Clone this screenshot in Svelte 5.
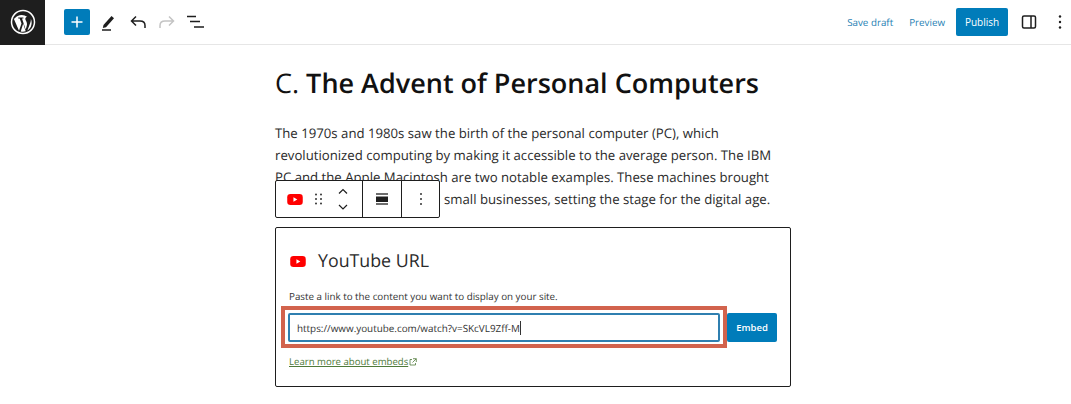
<script>
  const lines = [
    'The 1970s and 1980s saw the birth of the personal computer (PC), which',
    'revolutionized computing by making it accessible to the average person. The IBM',
    'PC and the Apple Macintosh are two notable examples. These machines brought',
    'computing into homes and small businesses, setting the stage for the digital age.'
  ];
</script>

{#snippet youtube()}
  <svg width="16" height="11" viewBox="0 0 24 17" class="yt">
    <rect width="24" height="17" rx="5" fill="#f00" />
    <path d="M9.6 5v7l6-3.500z" fill="#fff" />
  </svg>
{/snippet}

<div class="page">
  <header class="topbar">
    <div class="left">
      <div class="logo">
        <svg width="26" height="26" viewBox="0 0 26 26">
          <circle cx="13" cy="13" r="11.500" fill="none" stroke="#fff" stroke-width="1.500" />
          <path d="M3.700 9.500 9 21.800l2.500-7.300-1.800-5-1.500-.1V8.600h5.200v.8l-1.400.1 3.700 10.900 1-3.400c.6-1.900.3-3.300-.6-5-.5-1-1-1.800-.7-2.700.3-.8 1.100-1.300 1.900-1.200-3.500-3.300-10-2.600-12.600 1.400z" fill="#fff" />
          <path d="M13.200 14.600 10.700 22.400c1.600.5 3.400.4 5-.1zM20.800 9.700c.2 1.500-.1 2.800-.6 4.200l-2.800 7.600c4-2.300 5.300-7.700 3.400-11.800z" fill="#fff" />
        </svg>
      </div>
      <button class="add" aria-label="Add block">
        <svg width="14" height="14" viewBox="0 0 14 14"><path d="M7 1.500v11M1.500 7h11" stroke="#fff" stroke-width="1.500" /></svg>
      </button>
      <svg class="tool" width="20" height="20" viewBox="0 0 20 20">
        <path d="M4.500 13 12.500 4l2.500 2.300-8 9-3.200.6z" fill="#1e1e1e" />
        <path d="M3 18h9" stroke="#1e1e1e" stroke-width="1.500" />
      </svg>
      <svg class="tool" width="20" height="20" viewBox="0 0 20 20" fill="none" stroke="#1e1e1e" stroke-width="1.500">
        <path d="M17 16v-2.500c0-3-2-4.500-5-4.500H4M8 4.500 3.500 9 8 13.500" />
      </svg>
      <svg class="tool" width="20" height="20" viewBox="0 0 20 20" fill="none" stroke="#c4c4c4" stroke-width="1.500">
        <path d="M3 16v-2.500C3 10.500 5 9 8 9h8M12 4.500 16.500 9 12 13.500" />
      </svg>
      <svg class="tool" width="20" height="20" viewBox="0 0 20 20" fill="none" stroke="#1e1e1e" stroke-width="1.500">
        <path d="M1 4.500h9M4 9.500h10M8 15h10" />
      </svg>
    </div>
    <div class="right">
      <span class="link">Save draft</span>
      <span class="link">Preview</span>
      <button class="publish">Publish</button>
      <svg class="side" width="16" height="16" viewBox="0 0 16 16" fill="none" stroke="#1e1e1e" stroke-width="1.500">
        <rect x="1.500" y="2" width="13" height="12" rx="1.500" />
        <path d="M10 2v12" />
      </svg>
      <svg class="dots" width="4" height="16" viewBox="0 0 4 16" fill="#1e1e1e">
        <circle cx="2" cy="2.500" r="1.200" /><circle cx="2" cy="8" r="1.200" /><circle cx="2" cy="13.500" r="1.200" />
      </svg>
    </div>
  </header>

  <main class="editor">
    <h1><span class="light">C.</span> The Advent of Personal Computers</h1>

    <div class="para-wrap">
      <p>
        {#each lines as line}
          <span class="line">{line}</span>
        {/each}
      </p>

      <div class="block-toolbar">
        <div class="group first">
          {@render youtube()}
          <svg class="drag" width="10" height="14" viewBox="0 0 10 14" fill="#333">
            <circle cx="2" cy="2.500" r="1" /><circle cx="7" cy="2.500" r="1" />
            <circle cx="2" cy="7" r="1" /><circle cx="7" cy="7" r="1" />
            <circle cx="2" cy="11.500" r="1" /><circle cx="7" cy="11.500" r="1" />
          </svg>
          <svg width="12" height="24" viewBox="0 0 12 24" fill="none" stroke="#1e1e1e" stroke-width="1.200">
            <path d="M2 6.500 6 2.500l4 4M2 18l4 4 4-4" />
          </svg>
        </div>
        <div class="group align">
          <svg width="12" height="12" viewBox="0 0 12 12">
            <path d="M0 1h12" stroke="#1e1e1e" stroke-width="1.300" />
            <rect x="0" y="3.500" width="12" height="5.500" fill="#1e1e1e" />
            <path d="M0 11h12" stroke="#1e1e1e" stroke-width="1.300" />
          </svg>
        </div>
        <div class="group more">
          <svg width="4" height="14" viewBox="0 0 4 14" fill="#333">
            <circle cx="2" cy="2" r="1" /><circle cx="2" cy="7" r="1" /><circle cx="2" cy="12" r="1" />
          </svg>
        </div>
      </div>
    </div>

    <section class="embed">
      <div class="embed-title">
        {@render youtube()}
        <span>YouTube URL</span>
      </div>
      <p class="hint">Paste a link to the content you want to display on your site.</p>
      <div class="embed-row">
        <div class="input">https://www.youtube.com/watch?v=SKcVL9Zff-M<i class="caret"></i></div>
        <button class="embed-btn">Embed</button>
        <div class="highlight"></div>
      </div>
      <div class="learn">
        <span class="learn-link">Learn more about embeds</span>
        <svg width="8" height="8" viewBox="0 0 8 8" fill="none" stroke="#4f7a3a" stroke-width="0.800">
          <path d="M3 1.500H1v5.500h5.500V5M4 .7h3.300V4M7.200.8 3.500 4.500" />
        </svg>
      </div>
    </section>
  </main>
</div>

<style>
  :global(body) {
    background: #fff;
    color: #1e1e1e;
    font-family: "Open Sans", "Noto Sans", sans-serif;
    text-rendering: geometricPrecision;
  }

  .page {
    width: 1071px;
    height: 404px;
    overflow: hidden;
  }

  .topbar {
    display: flex;
    justify-content: space-between;
    align-items: center;
    height: 44px;
    border-bottom: 1px solid #e6e6e6;
  }

  .left,
  .right {
    display: flex;
    align-items: center;
  }

  .logo {
    display: flex;
    align-items: center;
    justify-content: center;
    width: 45px;
    height: 45px;
    background: #1e1e1e;
    margin-right: 19px;
  }

  .add {
    display: flex;
    align-items: center;
    justify-content: center;
    width: 26px;
    height: 26px;
    padding: 0;
    border: 0;
    border-radius: 2px;
    background: #007cba;
    margin-right: 9px;
  }

  .tool { margin-right: 9px; }

  .link {
    font-size: 9.800px;
    color: #1f7fb4;
    margin-right: 16px;
  }

  .publish {
    width: 52px;
    height: 28px;
    padding: 0;
    border: 0;
    border-radius: 2px;
    background: #007cba;
    color: #fff;
    font: 10px "Open Sans", sans-serif;
    margin-left: -5px;
    margin-right: 13px;
  }

  .side { margin-right: 21px; }
  .dots { margin-right: 9px; }

  .editor {
    width: 516px;
    margin-left: 275px;
  }

  h1 {
    margin: 0;
    padding-top: 19px;
    font-size: 27px;
    line-height: 38px;
    font-weight: 600;
    color: #111;
    white-space: nowrap;
  }

  .light { font-weight: 400; }

  .para-wrap {
    position: relative;
    margin-top: 20px;
  }

  p { margin: 0; }

  .line {
    display: block;
    font-size: 13.200px;
    line-height: 22px;
    white-space: nowrap;
    color: #2b2b2b;
  }

  .block-toolbar {
    position: absolute;
    left: 0;
    top: 58px;
    display: flex;
    height: 36px;
    background: #fff;
    border: 1px solid #1e1e1e;
    border-radius: 2px;
  }

  .group {
    display: flex;
    align-items: center;
    justify-content: center;
    border-left: 1px solid #1e1e1e;
  }

  .group.first {
    box-sizing: border-box;
    width: 86px;
    border-left: 0;
    justify-content: flex-start;
    padding-left: 11px;
    gap: 11px;
  }

  .drag { margin-right: 2px; }

  .align { width: 38px; }
  .more { width: 37px; }

  .embed {
    box-sizing: border-box;
    height: 160px;
    margin-top: 17px;
    padding: 20px 13px 0;
    border: 1px solid #1e1e1e;
    border-radius: 2px;
  }

  .embed-title {
    display: flex;
    align-items: center;
    gap: 12px;
    padding-left: 1px;
    font-size: 17.800px;
    line-height: 26px;
    color: #2b2b2b;
  }

  .hint {
    margin-top: 16px;
    font-size: 9.800px;
    line-height: 14px;
    color: #333;
  }

  .embed-row {
    position: relative;
    display: flex;
    align-items: center;
    gap: 7px;
    margin-top: 9px;
  }

  .input {
    box-sizing: border-box;
    display: flex;
    align-items: center;
    width: 433px;
    height: 29px;
    margin-left: -1px;
    padding-left: 7px;
    padding-top: 1px;
    border: 2px solid #2f7fb0;
    border-radius: 2px;
    font-size: 9.900px;
    color: #333;
  }

  .caret {
    width: 1px;
    height: 14px;
    background: #333;
  }

  .embed-btn {
    width: 50px;
    height: 29px;
    padding: 0;
    border: 0;
    border-radius: 2px;
    background: #007cba;
    color: #fff;
    font: 600 9.500px "Open Sans", sans-serif;
  }

  .highlight {
    position: absolute;
    left: -8px;
    top: -7px;
    width: 446px;
    height: 42px;
    box-sizing: border-box;
    border: 4px solid #d2634d;
  }

  .learn {
    display: flex;
    align-items: center;
    gap: 1px;
    margin-top: 13px;
    font-size: 9.600px;
    line-height: 14px;
    color: #4f7a3a;
  }

  .learn-link { text-decoration: underline; }
</style>
